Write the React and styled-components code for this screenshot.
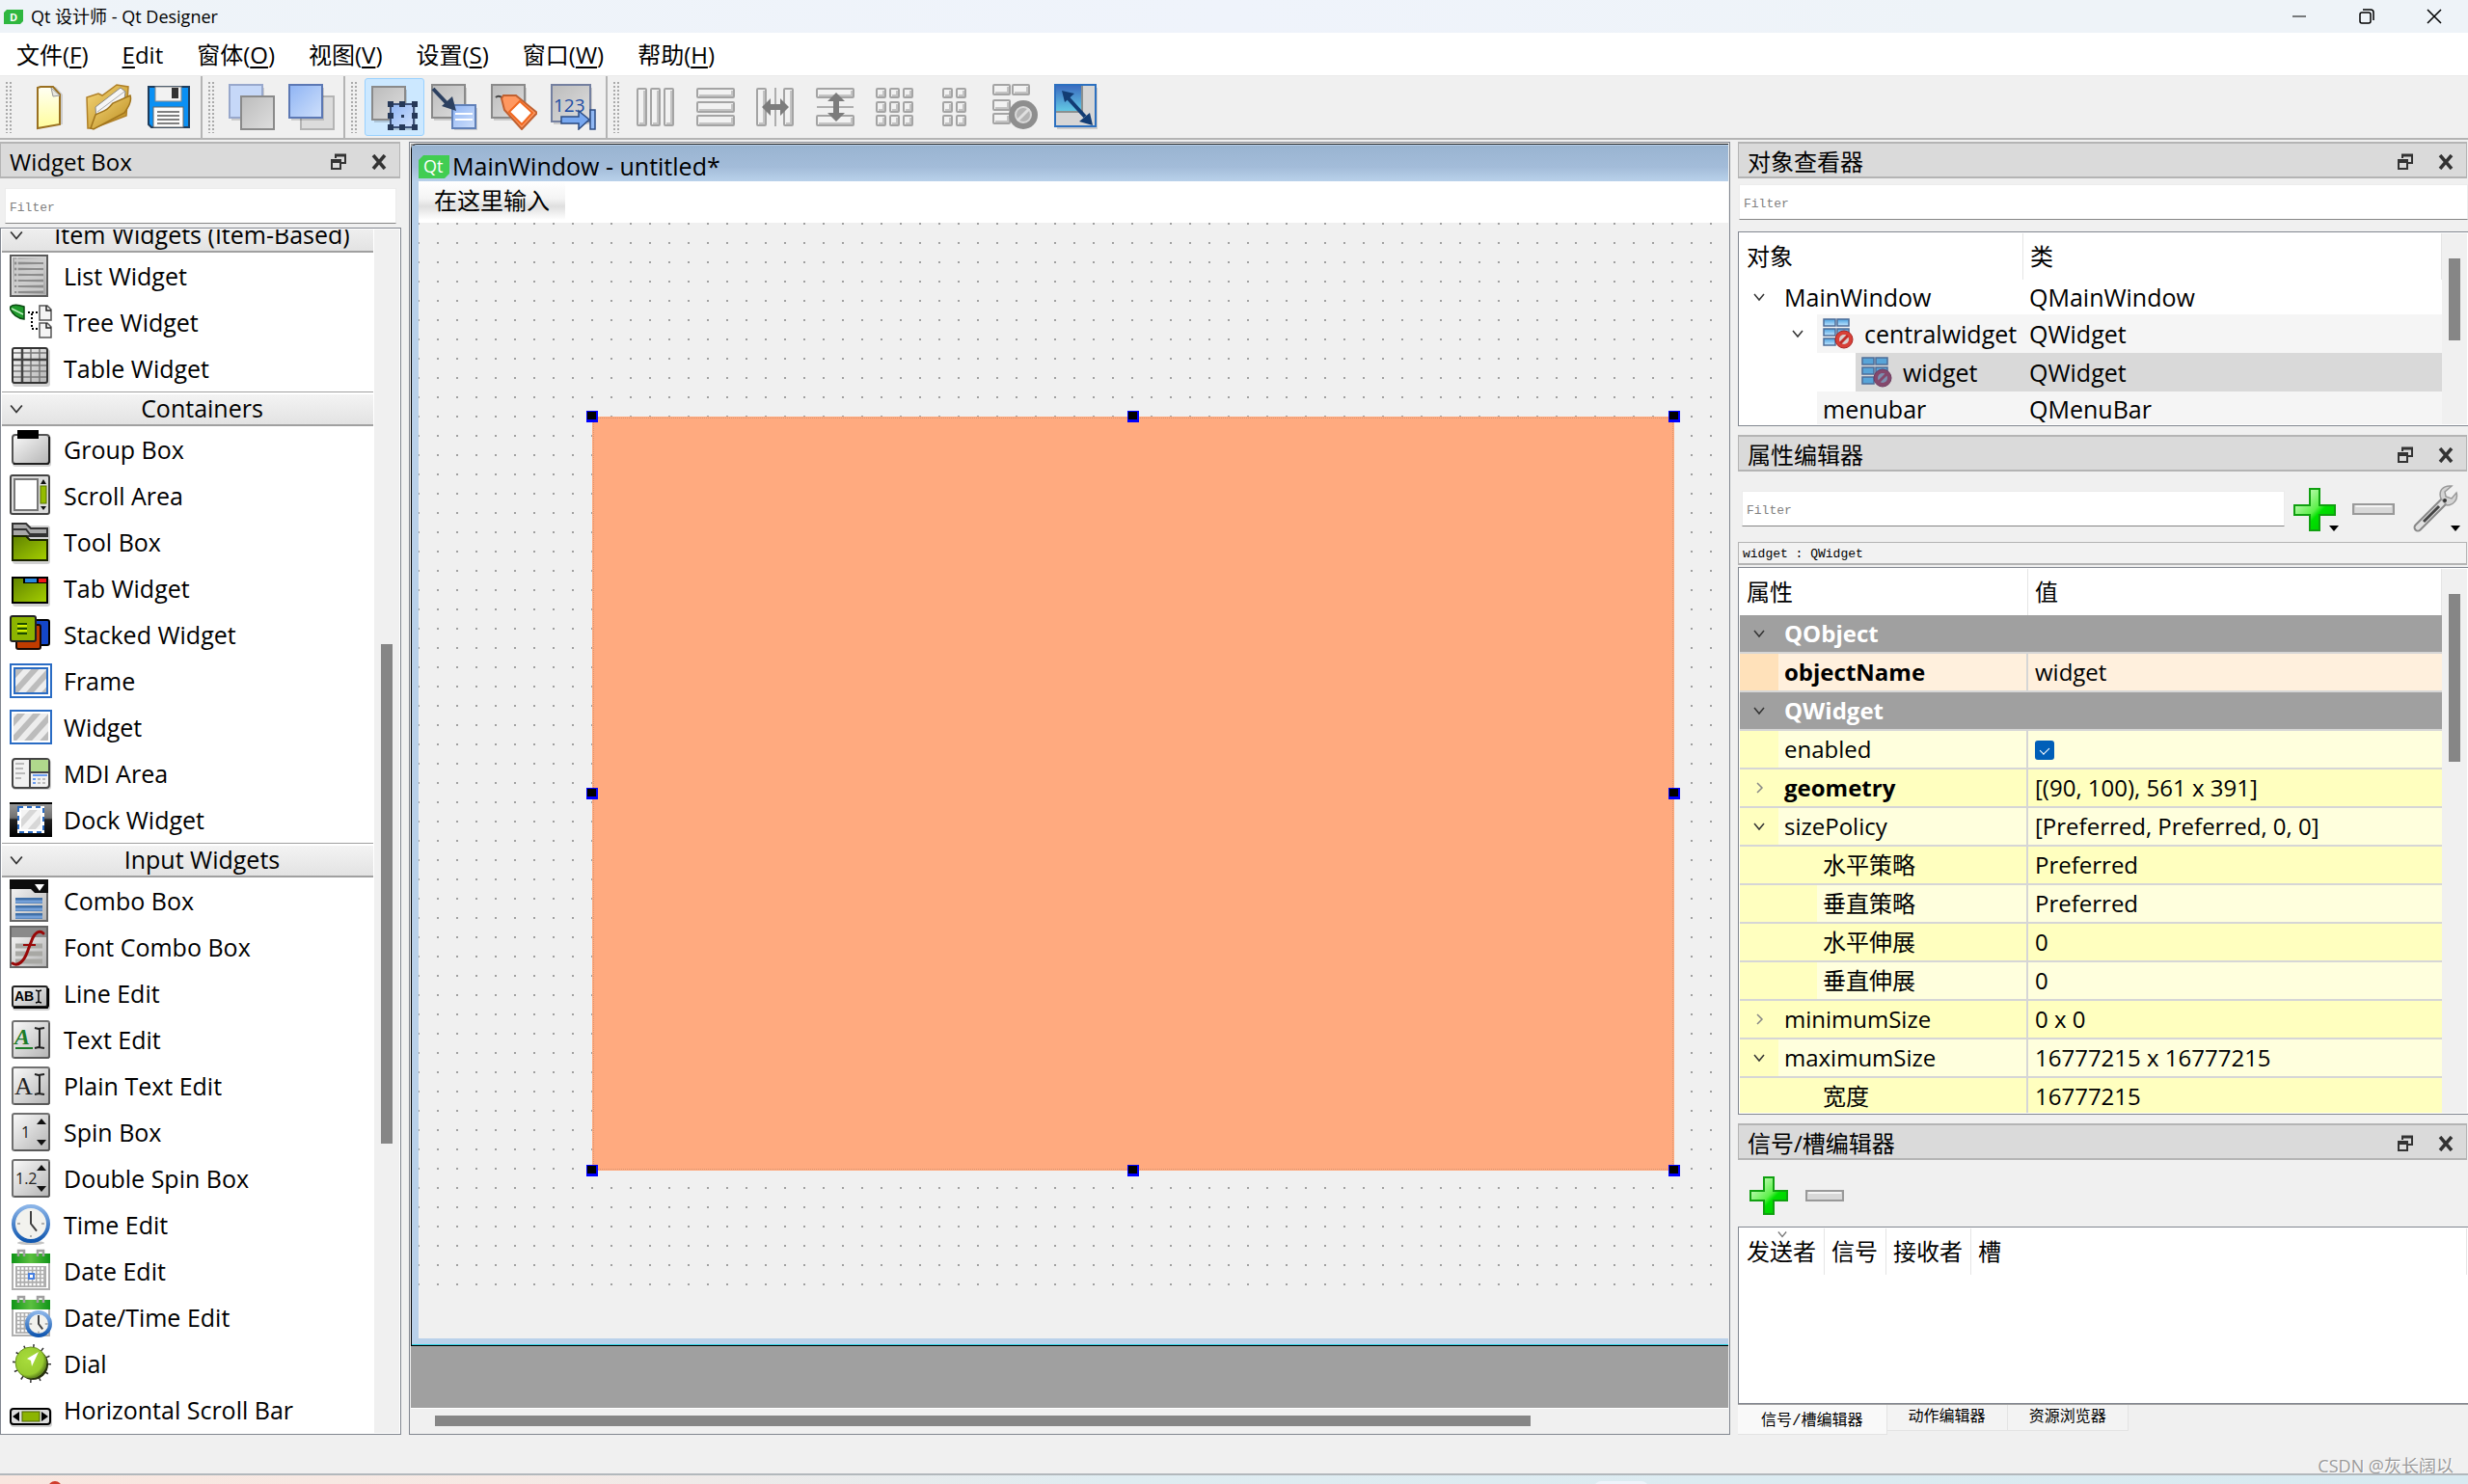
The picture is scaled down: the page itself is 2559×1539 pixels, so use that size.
import React, { useState } from 'react';
import styled, { createGlobalStyle, css } from 'styled-components';

const UI_FONT = '"Open Sans", "Noto Sans CJK SC", sans-serif';
const MONO_FONT = '"Liberation Mono", "Noto Sans CJK SC", monospace';

const GlobalStyle = createGlobalStyle`
  * {
    box-sizing: border-box;
  }

  body {
    margin: 0;
    background: #f0f0f0;
    color: #000;
    font-family: ${UI_FONT};
    font-size: 24px;
    line-height: 36px;
  }

  button {
    font: inherit;
    color: inherit;
    padding: 0;
    border: none;
    background: none;
  }

  svg {
    display: block;
    flex: none;
  }
`;

/* ---------- window chrome ---------- */

const Window = styled.div`
  display: flex;
  flex-direction: column;
  height: 100vh;
  overflow: hidden;
`;

const TitleBar = styled.header`
  display: flex;
  align-items: center;
  height: 34px;
  flex: none;
  padding-left: 4px;
  gap: 8px;
  background: linear-gradient(90deg, #eef3f8, #eff3fb 50%, #eef3f8 80%);
  font-size: 18px;
  line-height: 34px;
`;

const WindowButtons = styled.div`
  display: flex;
  margin-left: auto;
`;

const WindowButton = styled.button`
  display: flex;
  align-items: center;
  justify-content: center;
  width: 70px;
  height: 34px;
`;

const MenuBar = styled.nav`
  display: flex;
  flex: none;
  height: 45px;
  background: #fff;
  border-bottom: 1px solid #ebebeb;
`;

const MenuItem = styled.button`
  padding: 0 18px 0 17px;
  line-height: 41px;

  u {
    text-decoration-thickness: 2px;
    text-underline-offset: 3px;
  }
`;

const ToolBarArea = styled.div`
  display: flex;
  flex: none;
  height: 66px;
  border-bottom: 2px solid #b4b4b4;
`;

const ToolGroup = styled.div`
  display: flex;
  align-items: center;
  padding-right: 2px;
  border-right: ${(props) => (props.$last ? 'none' : '2px solid #b4b4b4')};
`;

const Grip = styled.span`
  width: 8px;
  height: 54px;
  margin: 0 7px 0 5px;
  background-image: radial-gradient(circle, #aaa 1px, transparent 1px);
  background-size: 4px 4px;
`;

const ToolButton = styled.button`
  display: flex;
  align-items: center;
  justify-content: center;
  width: 62px;
  height: 60px;
  border: 1px solid ${(props) => (props.$active ? '#99d1ff' : 'transparent')};
  border-radius: 3px;
  background: ${(props) => (props.$active ? '#cce8ff' : 'none')};
`;

const Workspace = styled.main`
  display: grid;
  grid-template-columns: 416px minmax(0, 1fr) 757px;
  grid-template-rows: minmax(0, 1fr);
  gap: 8px;
  flex: 1;
  min-height: 0;
  padding-top: 2px;
`;

/* ---------- docks ---------- */

const Dock = styled.section`
  display: flex;
  flex-direction: column;
  min-height: 0;
  min-width: 0;
  overflow: hidden;
`;

const DockTitle = styled.div`
  display: flex;
  align-items: center;
  flex: none;
  height: 38px;
  padding: 3px 10px 0 9px;
  margin-right: 1px;
  border: 2px solid #b4b4b4;
  border-width: 2px 1px;
  background: #dadada;

  h2 {
    flex: 1;
    margin: 0;
    font-size: 24px;
    font-weight: 400;
    line-height: 36px;
  }
`;

const DockButton = styled.button`
  display: flex;
  align-items: center;
  justify-content: center;
  width: 22px;
  height: 30px;
  margin-left: 20px;
`;

const Filter = styled.input`
  flex: ${(props) => (props.$grow ? '1' : 'none')};
  min-width: 0;
  height: 37px;
  margin: ${(props) => props.$margin || '0'};
  padding: 6px 4px 2px;
  border: 1px solid #ececec;
  border-bottom: 1px solid #868686;
  outline: none;
  background: #fff;
  font-family: ${MONO_FONT};
  font-size: 13px;

  &::placeholder {
    color: #808080;
    opacity: 1;
  }
`;

const Frame = styled.div`
  display: flex;
  flex: 1;
  min-height: 0;
  margin-top: ${(props) => props.$gap}px;
  border: 1px solid #828790;
  border-right-width: ${(props) => (props.$openRight ? '0' : '1px')};
  padding: 1px;
  background: #fff;
`;

const Track = styled.div`
  display: flex;
  flex: none;
  flex-direction: ${(props) => (props.$horizontal ? 'row' : 'column')};
  padding: ${(props) => (props.$horizontal ? '7px 0' : '0 7px')};
  background: #f0f0f0;
  ${(props) =>
    props.$horizontal
      ? css`
          height: 26px;
          border-top: 1px solid #fff;
        `
      : css`
          width: 26px;
        `}
`;

const TrackPart = styled.span`
  flex: ${(props) => props.$size} 0 0;
  background: ${(props) => (props.$thumb ? '#868686' : 'none')};
`;

/* ---------- widget box ---------- */

const WidgetList = styled.div`
  display: flex;
  flex: 1;
  flex-direction: column;
  justify-content: flex-end;
  overflow: hidden;
  font-size: 25px;
`;

const WidgetGroup = styled.button`
  display: flex;
  align-items: center;
  flex: none;
  height: 36px;
  padding: 0 8px;
  margin-right: 1px;
  border-top: 1px solid #a0a0a0;
  border-bottom: 2px solid #a0a0a0;
  background: linear-gradient(#fff 2px, #f3f3f3 2px, #e3e3e3);
  line-height: 33px;

  span {
    flex: 1;
    padding-left: 16px;
  }
`;

const WidgetRow = styled.button`
  display: flex;
  align-items: center;
  flex: none;
  gap: 12px;
  height: 48px;
  padding-left: 8px;
  text-align: left;
  line-height: 44px;
`;

/* ---------- form editor ---------- */

const MdiArea = styled.section`
  display: flex;
  flex-direction: column;
  min-width: 0;
  border: 1px solid #828790;
  padding: 1px;
  background: #f0f0f0;
  overflow: hidden;
`;

const MdiBody = styled.div`
  flex: 1;
  display: flex;
  flex-direction: column;
  min-height: 0;
  padding-bottom: 64px;
  background: #a0a0a0;
`;

const FormWindow = styled.div`
  display: flex;
  flex: 1;
  flex-direction: column;
  padding: 1px 0 7px 7px;
  border-top: 1px solid #222;
  border-left: 1px solid #000;
  border-bottom: 1px solid #000;
  border-top-left-radius: 6px;
  background: #b9d1ea;
  box-shadow: inset 0 -1px #2fd0e0;
`;

const FormTitle = styled.div`
  display: flex;
  align-items: center;
  gap: 3px;
  flex: none;
  height: 37px;
  margin-left: -7px;
  padding: 5px 0 0 7px;
  background: linear-gradient(#99b4d1, #a3bcd9 60%, #b9d1ea);
  font-size: 25px;

  svg {
    margin-top: 2px;
  }
`;

const FormMenu = styled.div`
  flex: none;
  height: 43px;
  background: #fff;
`;

const FormMenuItem = styled.button`
  height: 40px;
  padding: 0 16px;
  background: linear-gradient(#fff, #f4f4f4 45%, #dfdfdf 65%, #fff);
  line-height: 40px;
`;

const FormCanvas = styled.div`
  position: relative;
  flex: 1;
  padding-bottom: 55px;
  background: #f0f0f0;
`;

const DotGrid = styled.div`
  height: 100%;
  background-image: conic-gradient(at 2px 2px, transparent 75%, #a0a0a0 0);
  background-size: 20px 20px;
  background-position: -1px 0;
`;

const PlacedWidget = styled.div`
  position: absolute;
  left: 180px;
  top: 201px;
  width: 1122px;
  height: 782px;
  background: #ffaa7f;
  outline: 1px dotted #d99470;
  outline-offset: -2px;
`;

const Handle = styled.span`
  position: absolute;
  left: ${(props) => props.$x}%;
  top: ${(props) => props.$y}%;
  width: 12px;
  height: 12px;
  margin: -6px;
  border: 1px solid #0000ff;
  border-right-width: 2px;
  border-bottom-width: 3px;
  background: #000;
`;

/* ---------- right column ---------- */

const RightColumn = styled.div`
  display: grid;
  grid-template-rows: 295px minmax(0, 1fr) 323px;
  gap: 9px;
  min-height: 0;
`;

const TableView = styled.div`
  flex: 1;
  min-width: 0;
  overflow: hidden;
`;

const Table = styled.table`
  width: 100%;
  border-collapse: collapse;
  table-layout: fixed;

  th,
  td {
    padding: 0;
    font-weight: 400;
    text-align: left;
    white-space: nowrap;
  }
`;

const HeadCell = styled.th`
  width: ${(props) => (props.$width ? `${props.$width}px` : 'auto')};

  div {
    position: relative;
    height: 48px;
    padding: 0 0 0 7px;
    border-right: 1px solid #e5e5e5;
    line-height: 48px;
  }

  svg {
    position: absolute;
    top: 1px;
    left: calc(50% - 5px);
  }
`;

const ObjectName = styled.div`
  display: flex;
  align-items: center;
  height: ${(props) => props.$height}px;
  margin-left: ${(props) => props.$indent}px;
  font-size: 25px;

  span {
    flex: 1;
    align-self: stretch;
    display: flex;
    align-items: center;
    gap: 11px;
    padding-left: 6px;
    background: ${(props) => props.$bg};
  }
`;

const ObjectClass = styled.td`
  background: ${(props) => props.$bg};
  font-size: 25px;

  div {
    padding-left: 6px;
  }
`;

const ArrowCell = styled.i`
  display: flex;
  align-items: center;
  justify-content: center;
  width: 40px;
  flex: none;
`;

const PropRow = styled.tr`
  background: ${(props) => props.$bg};
  color: ${(props) => (props.$group ? '#fff' : '#000')};
  font-weight: ${(props) => (props.$bold ? 700 : 400)};

  td {
    border-bottom: 2px solid #d6d6d6;
  }

  td:first-child > div {
    display: flex;
    height: 38px;
    background: linear-gradient(90deg, ${(props) => props.$edge} ${(props) => props.$indent}px, transparent 0);
    border-right: ${(props) => (props.$group ? 'none' : '2px solid #d6d6d6')};
    line-height: 38px;
  }

  td:first-child span {
    margin-left: ${(props) => props.$indent - 40 + 6}px;
    font-weight: ${(props) => (props.$bold ? 700 : 400)};
  }

  td:nth-child(2) {
    padding-left: 7px;
    line-height: 38px;
  }
`;

const CheckBox = styled.input`
  appearance: none;
  display: block;
  width: 20px;
  height: 20px;
  margin: 1px 0 0;
  border-radius: 3px;
  background: #005fb8;
  position: relative;

  &::after {
    content: '';
    position: absolute;
    left: 7px;
    top: 5px;
    width: 5px;
    height: 8px;
    border: solid #fff;
    border-width: 0 1px 1px 0;
    transform: rotate(45deg);
  }
`;

const PropTools = styled.div`
  display: flex;
  align-items: center;
  flex: none;
  height: 73px;
  padding: 4px 8px 0 4px;
`;

const PropToolButton = styled.button`
  width: 50px;
  height: 54px;
  margin-left: ${(props) => props.$gap}px;
`;

const ObjectLabel = styled.div`
  flex: none;
  height: 24px;
  padding-left: 4px;
  margin-right: 1px;
  border: 1px solid #b4b4b4;
  border-bottom-width: 2px;
  background: #f2f2f2;
  font-family: ${MONO_FONT};
  font-size: 13px;
  line-height: 24px;
`;

const SignalTools = styled.div`
  display: flex;
  align-items: center;
  flex: none;
  gap: 18px;
  height: 68px;
  padding: 6px 12px 0;
`;

const Tabs = styled.div`
  display: flex;
  flex: none;
  height: 32px;
  border-top: 1px solid #a0a0a0;
`;

const Tab = styled.button`
  height: ${(props) => (props.$active ? 31 : 27)}px;
  padding: ${(props) => (props.$active ? '3px 24px 0' : '0 22px')};
  border: 1px solid #e3e3e3;
  border-top: none;
  border-left: none;
  background: ${(props) => (props.$active ? '#f9f9f9' : '#f3f3f3')};
  font-family: ${MONO_FONT};
  font-size: 16px;
  line-height: 26px;
`;

const StatusBar = styled.footer`
  display: flex;
  flex: none;
  align-items: flex-end;
  justify-content: flex-end;
  height: 40px;
  padding-right: 15px;
  color: #9a9a9a;
  font-size: 18px;
  line-height: 16px;
  text-shadow: 1px 1px #fff;
`;

const Desktop = styled.div`
  display: flex;
  flex: none;
  justify-content: space-between;
  height: 11px;
  padding: 6px 850px 0 50px;
  border-top: 2px solid #b2b8bc;
  background: linear-gradient(90deg, #f9e6df, #f6e9e4 20%, #dfecf1 45%, #d8eaf1);
  overflow: hidden;
`;

const TaskIcon = styled.span`
  flex: none;
  width: ${(props) => props.$width}px;
  height: 14px;
  border-radius: 7px;
  background: ${(props) => props.$color};
`;

/* ---------- icons ---------- */

const HiddenSvg = styled.svg`
  position: absolute;
`;

const Defs = () => (
  <HiddenSvg width="0" height="0" aria-hidden="true">
    <defs>
      <linearGradient id="gray" x1="0" y1="0" x2="1" y2="1">
        <stop offset="0" stopColor="#fafafa" />
        <stop offset="1" stopColor="#b4b4b4" />
      </linearGradient>
      <linearGradient id="steel" x1="0" y1="0" x2="1" y2="1">
        <stop offset="0" stopColor="#a8a8a8" />
        <stop offset=".5" stopColor="#d0d0d0" />
        <stop offset="1" stopColor="#a4a4a4" />
      </linearGradient>
      <linearGradient id="pane" x1="0" y1="0" x2="1" y2="1">
        <stop offset="0" stopColor="#bcbcbc" />
        <stop offset="1" stopColor="#dedede" />
      </linearGradient>
      <linearGradient id="blue" x1="0" y1="0" x2="1" y2="1">
        <stop offset="0" stopColor="#8fb4f4" />
        <stop offset="1" stopColor="#cfe0fb" />
      </linearGradient>
      <linearGradient id="green" x1="0" y1="0" x2="1" y2="1">
        <stop offset="0" stopColor="#5f8200" />
        <stop offset="1" stopColor="#a6d000" />
      </linearGradient>
      <linearGradient id="plus" x1="0" y1="0" x2="1" y2="1">
        <stop offset=".1" stopColor="#d4fbc8" />
        <stop offset=".5" stopColor="#5cf04a" />
        <stop offset=".6" stopColor="#00e000" />
        <stop offset="1" stopColor="#00c400" />
      </linearGradient>
      <linearGradient id="gold" x1="0" y1="0" x2="1" y2="1">
        <stop offset="0" stopColor="#f6d77a" />
        <stop offset="1" stopColor="#b98a1c" />
      </linearGradient>
      <linearGradient id="paper" x1="0" y1="0" x2="0" y2="1">
        <stop offset="0" stopColor="#fffff4" />
        <stop offset="1" stopColor="#fffd9c" />
      </linearGradient>
      <linearGradient id="rim" x1="0" y1="0" x2="0" y2="1">
        <stop offset="0" stopColor="#8ab4e8" />
        <stop offset="1" stopColor="#1258b0" />
      </linearGradient>
      <linearGradient id="calendar" x1="0" y1="0" x2="1" y2="0">
        <stop offset="0" stopColor="#109418" />
        <stop offset=".5" stopColor="#5cc040" />
        <stop offset="1" stopColor="#109418" />
      </linearGradient>
      <linearGradient id="dark" x1="0" y1="0" x2="0" y2="1">
        <stop offset="0" stopColor="#9a9a9a" />
        <stop offset=".45" stopColor="#707070" />
        <stop offset=".5" stopColor="#222" />
        <stop offset="1" stopColor="#000" />
      </linearGradient>
      <linearGradient id="sky" x1="0" y1="0" x2="0" y2="1">
        <stop offset="0" stopColor="#3c6cc0" />
        <stop offset="1" stopColor="#62c8e4" />
      </linearGradient>
      <linearGradient id="cell" x1="0" y1="0" x2="0" y2="1">
        <stop offset="0" stopColor="#4aa0e0" />
        <stop offset="1" stopColor="#c4e8ff" />
      </linearGradient>
      <radialGradient id="dial" cx=".4" cy=".4" r=".7">
        <stop offset="0" stopColor="#a8dc3c" />
        <stop offset=".7" stopColor="#98cc30" />
        <stop offset="1" stopColor="#3c5810" />
      </radialGradient>
      <pattern id="stripes" width="12" height="12" patternUnits="userSpaceOnUse" patternTransform="rotate(42)">
        <rect width="12" height="12" fill="#ededed" />
        <rect width="6" height="12" fill="#bcbcbc" />
      </pattern>
    </defs>
  </HiddenSvg>
);

const Shadow = ({ x, y, w, h }) => (
  <rect x={x + 1} y={y + 2} width={w + 1} height={h + 1} rx="3" fill="#000" opacity=".18" />
);

const Key = ({ children }) => (
  <>
    <rect x="3" y="4" width="38" height="38" rx="2" fill="url(#gray)" stroke="#707070" strokeWidth="2" />
    <path d="M41 6v36H5" fill="none" stroke="#444" strokeWidth="1" />
    {children}
  </>
);

const Clock = ({ cx, cy, r }) => (
  <>
    <circle cx={cx} cy={cy} r={r - 2} fill="#f2f2ee" stroke="url(#rim)" strokeWidth="4" />
    <path
      d={`M${cx} ${cy - r * 0.65}V${cy}L${cx + r * 0.3} ${cy + r * 0.38}`}
      fill="none"
      stroke="#404040"
      strokeWidth="2"
    />
    <path
      d={`M${cx - r * 0.7} ${cy}h3M${cx + r * 0.7} ${cy}h-3M${cx} ${cy + r * 0.7}v-2`}
      stroke="#999"
      strokeWidth="1.5"
    />
  </>
);

const Calendar = () => (
  <>
    <rect x="3" y="12" width="38" height="30" fill="#fff" stroke="#b0b0b0" strokeWidth="2" />
    <rect x="2" y="5" width="40" height="10" fill="url(#calendar)" />
    <path d="M9 8V2h6v6M29 8V2h6v6" fill="none" stroke="#a0a0a0" strokeWidth="2.5" />
    <rect x="6" y="18" width="32" height="22" fill="#aeaeae" />
    <path
      d="M8 20.500h28M8 24.500h28M8 28.500h28M8 32.500h28M8 37h28"
      stroke="#fff"
      strokeWidth="2.5"
      strokeDasharray="2.500 1.600"
    />
  </>
);

const Spin = ({ label, x }) => (
  <Key>
    <text x={x} y="29" fontFamily="Open Sans" fontSize="16" fill="#222">
      {label}
    </text>
    <path d="M28 15l5-6 5 6zM28 31l5 6 5-6z" fill="#111" />
  </Key>
);

const widgetIcons = {
  list: (
    <>
      <rect x="1" y="2" width="38" height="42" fill="url(#gray)" stroke="#5a5a5a" strokeWidth="2" />
      <rect x="3" y="4" width="34" height="38" fill="url(#steel)" />
      <path d="M5 10h30M5 16h30M5 22h30M5 28h30M5 34h30M5 40h30" stroke="#8c8c8c" strokeWidth="2" />
      <path d="M5 7h30M5 13h30M5 19h30M5 25h30M5 31h30M5 37h30" stroke="#ccc" strokeWidth="2" />
      <path d="M8 4v38" stroke="#ccc" strokeWidth="1.5" />
    </>
  ),
  tree: (
    <>
      <path d="M0 8C3 4 9 5 15 7v13C8 19 3 16 0 8z" fill="#1f9a2c" stroke="#0b4a12" strokeWidth="1.5" />
      <path d="M2 9l12 6" stroke="#bff0bf" strokeWidth="1.5" />
      <path d="M19 13h10M23 14v16M23 30h6" fill="none" stroke="#000" strokeWidth="2" strokeDasharray="2 2" />
      <path d="M31 6h8l4 4v11H31zM31 24h8l4 4v11H31z" fill="#f4f4f4" stroke="#555" strokeWidth="1.5" />
      <path d="M38 6v5h5M38 24v5h5" fill="none" stroke="#222" strokeWidth="1.5" />
    </>
  ),
  table: (
    <>
      <Shadow x={2} y={1} w={38} h={38} />
      <rect x="3" y="2" width="36" height="36" rx="2" fill="url(#gray)" stroke="#333" strokeWidth="2" />
      <path d="M4 7h34M4 20h34M4 26h34M4 32h34M22 3v34M31 3v34" stroke="#777" strokeWidth="1.5" />
      <path d="M4 14h34M13 3v34" stroke="#444" strokeWidth="2.5" />
    </>
  ),
  group: (
    <>
      <Shadow x={2} y={7} w={39} h={31} />
      <rect x="3" y="8" width="38" height="30" rx="3" fill="url(#gray)" stroke="#555" strokeWidth="2" />
      <path d="M4 38h36l1-2V10" fill="none" stroke="#111" strokeWidth="1.5" />
      <rect x="8" y="3" width="22" height="9" fill="#000" />
    </>
  ),
  scroll: (
    <>
      <rect x="1" y="2" width="40" height="40" rx="2" fill="#dcdcdc" stroke="#444" strokeWidth="2" />
      <rect x="5" y="6" width="24" height="32" fill="#fff" stroke="#777" strokeWidth="2" />
      <path d="M32 11l3-5 3 5zM32 34l3 4 3-4z" fill="#111" />
      <rect x="32" y="13" width="6" height="18" fill="#94bc00" stroke="#5a7400" />
    </>
  ),
  toolbox: (
    <>
      <Shadow x={2} y={4} w={38} h={39} />
      <path d="M3 4h14l5 5h17v8H3z" fill="#a8a8a8" stroke="#333" strokeWidth="2" />
      <path d="M3 10h14l4 5h18" fill="none" stroke="#333" strokeWidth="2" />
      <path d="M3 17h14l4 4h18v21H3z" fill="url(#green)" stroke="#1a2400" strokeWidth="2" />
    </>
  ),
  tab: (
    <>
      <Shadow x={2} y={11} w={38} h={28} />
      <rect x="3" y="12" width="36" height="26" fill="url(#green)" stroke="#000" strokeWidth="2" />
      <path d="M14 11h26v7H14z" fill="#000" />
      <rect x="16" y="13" width="12" height="4" fill="#2888e0" />
      <rect x="30" y="13" width="8" height="4" fill="#f01818" />
    </>
  ),
  stacked: (
    <>
      <rect x="24" y="8" width="17" height="26" rx="2" fill="#1446c8" stroke="#000" strokeWidth="2" />
      <rect x="7" y="13" width="25" height="25" rx="2" fill="#c03c00" stroke="#1a0800" strokeWidth="2" />
      <rect x="1" y="4" width="26" height="26" rx="2" fill="#8cb400" stroke="#222" strokeWidth="2" />
      <path d="M8 12h10M8 17h10M8 22h10" stroke="#1c4c00" strokeWidth="2" />
      <path d="M8 14h10M8 19h10" stroke="#d4f000" strokeWidth="2" />
    </>
  ),
  frame: (
    <>
      <rect x="1" y="6" width="42" height="34" fill="#fff" stroke="#2a6cc4" strokeWidth="2" />
      <rect x="5" y="10" width="34" height="26" fill="url(#stripes)" stroke="#2a6cc4" strokeWidth="2" />
    </>
  ),
  widget: (
    <>
      <rect x="1" y="6" width="42" height="34" fill="#fff" stroke="#2a6cc4" strokeWidth="2" />
      <rect x="4" y="9" width="36" height="28" fill="url(#stripes)" />
    </>
  ),
  mdi: (
    <>
      <Shadow x={2} y={7} w={39} h={30} />
      <rect x="3" y="8" width="38" height="30" rx="3" fill="#f2f2f2" stroke="#444" strokeWidth="2" />
      <path d="M6 13h9M6 18h8M6 23h10M6 28h6" stroke="#bbb" strokeWidth="2" />
      <rect x="22" y="9" width="18" height="12" fill="#b0d88c" />
      <path d="M21 8v30M21 22h20" stroke="#444" strokeWidth="2" />
      <path d="M24 25h15M24 29h3M24 33h3" stroke="#6a9cf0" strokeWidth="2" />
      <path d="M29 29h10M29 33h10" stroke="#aaa" strokeWidth="1.5" strokeDasharray="3 2" />
    </>
  ),
  dock: (
    <>
      <rect x="0" y="5" width="44" height="36" fill="url(#dark)" />
      <path d="M0 6h44" stroke="#000" strokeWidth="2" />
      <rect x="8" y="9" width="28" height="28" fill="#fff" />
      <rect x="9" y="10" width="26" height="26" fill="none" stroke="#2a6cc4" strokeWidth="2" strokeDasharray="5 4" />
      <rect x="12" y="13" width="20" height="20" fill="url(#stripes)" opacity=".6" />
    </>
  ),
  combo: (
    <>
      <rect x="1" y="2" width="38" height="42" fill="url(#gray)" stroke="#666" strokeWidth="2" />
      <path d="M0 1h40v14H26l-4-4H0z" fill="#0c0c0c" />
      <path d="M26 6h10l-5 7z" fill="#fff" />
      <path d="M6 23h28M6 31h28M6 39h28" stroke="#4070a8" strokeWidth="6" />
      <path d="M6 24h28M6 32h28M6 40h28" stroke="#74a0d8" strokeWidth="3" />
    </>
  ),
  font: (
    <>
      <rect x="1" y="2" width="38" height="42" fill="url(#gray)" stroke="#666" strokeWidth="2" />
      <rect x="2" y="3" width="36" height="10" fill="#8a8a8a" />
      <path d="M6 22h28M6 30h28M6 38h28" stroke="#a8a8a4" strokeWidth="5" />
      <path
        d="M35 9c-4-4-9-1-12 7l-5 13C15 37 9 44 3 40"
        fill="none"
        stroke="#980808"
        strokeWidth="3"
        strokeLinecap="round"
      />
      <path d="M14 21h13" stroke="#980808" strokeWidth="2" />
    </>
  ),
  line: (
    <>
      <Shadow x={2} y={15} w={38} h={23} />
      <rect x="3" y="16" width="36" height="21" rx="2" fill="url(#gray)" stroke="#222" strokeWidth="2" />
      <path d="M4 38h35l1-2V18" fill="none" stroke="#000" strokeWidth="2" />
      <text x="5" y="31" fontFamily="Liberation Sans" fontWeight="700" fontSize="14" fill="#000">
        AB
      </text>
      <path d="M27 20l3 1 3-1M27 33l3-1 3 1M30 21v11" fill="none" stroke="#000" strokeWidth="1.5" />
    </>
  ),
  text: (
    <Key>
      <text x="5" y="28" fontFamily="Liberation Serif" fontStyle="italic" fontWeight="700" fontSize="24" fill="#1c7c28">
        A
      </text>
      <path d="M6 32h18" stroke="#1c7c28" strokeWidth="2" />
      <path d="M26 11l4 1 6-1M26 32l4-1 6 1M31 12v19" fill="none" stroke="#222" strokeWidth="2" />
    </Key>
  ),
  plain: (
    <Key>
      <text x="5" y="32" fontFamily="Liberation Serif" fontSize="26" fill="#222">
        A
      </text>
      <path d="M26 11l4 1 6-1M26 32l4-1 6 1M31 12v19" fill="none" stroke="#222" strokeWidth="2" />
    </Key>
  ),
  spin: <Spin label="1" x={12} />,
  double: <Spin label="1.2" x={6} />,
  time: (
    <>
      <ellipse cx="22" cy="42" rx="14" ry="2" fill="#888" opacity=".5" />
      <Clock cx={22} cy={22} r={20} />
    </>
  ),
  date: (
    <>
      <Calendar />
      <rect x="20" y="26" width="5" height="5" fill="#fff" stroke="#4880e0" strokeWidth="2" />
    </>
  ),
  datetime: (
    <>
      <Calendar />
      <Clock cx={30} cy={30} r={14} />
    </>
  ),
  dial: (
    <>
      <circle cx="23" cy="23" r="18" fill="none" stroke="#333" strokeWidth="4" strokeDasharray="1.500 8" />
      <circle cx="24" cy="24" r="16" fill="#26300c" />
      <circle cx="22" cy="22" r="16" fill="url(#dial)" stroke="#6c9420" />
      <path d="M30 11L18 18l4 2 1 6z" fill="#fff" />
    </>
  ),
  hscroll: (
    <>
      <Shadow x={0} y={21} w={42} h={17} />
      <rect x="1" y="22" width="41" height="16" rx="3" fill="#ddd" stroke="#000" strokeWidth="2" />
      <path d="M10 25v10l-7-5zM33 25v10l7-5z" fill="#000" />
      <rect x="13" y="25" width="18" height="10" fill="#8cb400" stroke="#4c6400" />
    </>
  ),
};

const WidgetIcon = ({ name }) => (
  <svg width="44" height="46" viewBox="0 0 44 46" aria-hidden="true">
    {widgetIcons[name]}
  </svg>
);

const Pane = ({ x, y, w = 34, h = 34, fill = 'url(#pane)', stroke = '#8a8a8a' }) => (
  <>
    <rect x={x + 2} y={y + 3} width={w} height={h} fill="#000" opacity=".15" />
    <rect x={x} y={y} width={w} height={h} fill={fill} stroke={stroke} strokeWidth="2" />
  </>
);

const Bars = ({ rects }) =>
  rects.map(([x, y, w, h]) => (
    <g key={`${x}-${y}`}>
      <rect x={x} y={y} width={w} height={h} rx="1" fill="#f2f2f2" stroke="#a4a4a4" strokeWidth="2" />
      <path d={`M${x + 2} ${y + h - 2}h${w - 4}V${y + 2}`} fill="none" stroke="#c4c4c4" strokeWidth="2" />
    </g>
  ));

const toolIcons = {
  new: (
    <>
      <path d="M12 4l3-1h16l7 8v31l-26 4z" fill="#000" opacity=".15" />
      <path d="M12 4l3-1h13l7 8v31l-23 4z" fill="url(#paper)" stroke="#9a7020" strokeWidth="2" />
      <path d="M26 4l2 9 7-1z" fill="#e8e8e0" stroke="#999" strokeWidth="1" />
    </>
  ),
  open: (
    <>
      <path d="M1 14l12-4 4 2L32 1l12 2-2 30L8 46H2z" fill="url(#gold)" stroke="#b08028" strokeWidth="1.5" />
      <path d="M10 24L36 4l5 4-2 16-28 14z" fill="#f6f6f6" stroke="#888" />
      <path d="M12 29L40 8" stroke="#aaa" />
      <path d="M5 46l5-14c8-4 12-4 18-12l18-8c2 6-2 12-6 18L8 47z" fill="url(#gold)" stroke="#a0741c" strokeWidth="1.5" />
    </>
  ),
  save: (
    <>
      <path d="M3 3h42v42H6l-3-3z" fill="#0a90f4" stroke="#1e3c5c" strokeWidth="2" />
      <rect x="10" y="3" width="27" height="15" fill="#f2f2f2" stroke="#888" />
      <rect x="27" y="4" width="7" height="11" fill="#333" />
      <rect x="8" y="24" width="31" height="21" fill="#fcfcfc" stroke="#666" />
      <path d="M12 29h23M12 33h23M12 37h23M12 41h23" stroke="#555" strokeWidth="1.5" />
    </>
  ),
  back: (
    <>
      <Pane x={1} y={1} fill="#c6d8f8" stroke="#98a8cc" />
      <Pane x={13} y={13} />
    </>
  ),
  front: (
    <>
      <Pane x={13} y={13} fill="#dcdcdc" stroke="#b4b4b4" />
      <Pane x={1} y={1} fill="url(#blue)" stroke="#5c78b4" />
    </>
  ),
  editWidgets: (
    <>
      <Pane x={1} y={3} />
      <Pane x={20} y={21} w={24} h={24} fill="url(#blue)" stroke="#3c5078" />
      <path
        d="M17 18h6v6h-6zM29 18h6v6h-6zM42 18h6v6h-6zM17 30h6v6h-6zM42 30h6v6h-6zM17 42h6v6h-6zM29 42h6v6h-6zM42 42h6v6h-6z"
        fill="#263858"
      />
      <rect x="31" y="32" width="3" height="3" fill="#263858" />
    </>
  ),
  editSignals: (
    <>
      <Pane x={1} y={1} />
      <Pane x={22} y={22} w={24} h={24} fill="url(#blue)" stroke="#6080b8" />
      <path d="M25 31h18M25 37h18" stroke="#fff" strokeWidth="2" />
      <path d="M2 5l16 17" stroke="#2c4060" strokeWidth="4" />
      <path d="M26 28l-15-5 11-10z" fill="#2c4060" />
    </>
  ),
  editBuddies: (
    <>
      <Pane x={1} y={1} />
      <path d="M5 14c3-3 8 0 9 4" fill="none" stroke="#444" strokeWidth="2" />
      <path d="M11 15l2-3h13l22 18-16 17-18-20z" fill="#ff9860" stroke="#c06030" strokeWidth="2" />
      <path d="M30 18l13 12-11 12-13-13z" fill="#fff" stroke="#f06820" strokeWidth="2" />
    </>
  ),
  editTabs: (
    <>
      <Pane x={1} y={1} w={40} h={38} stroke="#7480a0" />
      <text x="3" y="29" fontFamily="Open Sans" fontSize="19" fill="#1c4ca4">
        123
      </text>
      <path d="M11 34h18v-6l11 9-11 10v-6H11z" fill="#78a8f0" stroke="#2c4c84" strokeWidth="1.5" />
      <rect x="41" y="27" width="5" height="20" fill="#90b8f4" stroke="#2c4c84" strokeWidth="1.5" />
    </>
  ),
  layoutH: <Bars rects={[[4, 5, 9, 38], [18, 5, 9, 38], [32, 5, 9, 38]]} />,
  layoutV: <Bars rects={[[4, 5, 38, 9], [4, 19, 38, 10], [4, 33, 38, 10]]} />,
  splitH: (
    <>
      <Bars rects={[[4, 5, 9, 38], [32, 5, 9, 38]]} />
      <path d="M23 4v40" stroke="#999" strokeWidth="1.5" />
      <path d="M9 24l9-9v6h10v-6l9 9-9 9v-6H18v6z" fill="#7c7c7c" />
    </>
  ),
  splitV: (
    <>
      <Bars rects={[[4, 5, 38, 9], [4, 33, 38, 10]]} />
      <path d="M4 24h38" stroke="#999" strokeWidth="1.5" />
      <path d="M24 9l9 9h-6v12h6l-9 9-9-9h6V18h-6z" fill="#7c7c7c" />
    </>
  ),
  grid: (
    <Bars
      rects={[
        [4, 5, 9, 9], [18, 5, 9, 9], [32, 5, 9, 9],
        [4, 19, 9, 10], [18, 19, 9, 10], [32, 19, 9, 10],
        [4, 33, 9, 10], [18, 33, 9, 10], [32, 33, 9, 10],
      ]}
    />
  ),
  form: (
    <Bars
      rects={[
        [11, 5, 9, 9], [25, 5, 9, 9],
        [11, 19, 9, 10], [25, 19, 9, 10],
        [11, 33, 9, 10], [25, 33, 9, 10],
      ]}
    />
  ),
  breakLayout: (
    <>
      <Bars rects={[[1, 1, 17, 10], [21, 1, 17, 10], [1, 17, 17, 10], [1, 31, 17, 10]]} />
      <circle cx="32" cy="32" r="15" fill="#8e8e8e" />
      <circle cx="32" cy="32" r="8" fill="#b4b4b4" stroke="#d8d8d8" strokeWidth="2" />
      <path d="M26 38l12-12" stroke="#e0e0e0" strokeWidth="3" />
    </>
  ),
  adjust: (
    <>
      <Pane x={3} y={1} w={42} h={43} fill="#d6d6d6" stroke="#2c70c0" />
      <rect x="4" y="2" width="26" height="26" fill="url(#sky)" />
      <path d="M31 2v27H4" fill="none" stroke="#8a9090" strokeWidth="2" />
      <path d="M14 12l20 22" stroke="#123c74" strokeWidth="4" />
      <path d="M10 7l13 3-10 9zM42 43l-14-4 11-9z" fill="#123c74" />
    </>
  ),
};

const ToolIcon = ({ name }) => (
  <svg width="48" height="48" viewBox="0 0 48 48" aria-hidden="true">
    {toolIcons[name]}
  </svg>
);

const Chevron = ({ right, color = '#333', size = 12 }) => (
  <svg width={size} height={size} viewBox="0 0 12 12" aria-hidden="true">
    <path d={right ? 'M4 1l5 5-5 5' : 'M1 3l5 6 5-6'} fill="none" stroke={color} strokeWidth="1.5" />
  </svg>
);

const PlusIcon = ({ size = 40 }) => (
  <svg width={size} height={size} viewBox="0 0 40 40" aria-hidden="true">
    <path d="M15 1h10v14h14v10H25v14H15V25H1V15h14z" fill="url(#plus)" stroke="#10a010" strokeWidth="2" />
  </svg>
);

const MinusIcon = ({ width = 40 }) => (
  <svg width={width} height="12" viewBox="0 0 40 12" preserveAspectRatio="none" aria-hidden="true">
    <rect x="1" y="1" width="38" height="10" fill="#d8d8d8" stroke="#999" strokeWidth="2" />
    <path d="M3 3h34" stroke="#f4f4f4" strokeWidth="2" />
  </svg>
);

const LayoutBadge = ({ muted }) => (
  <svg width="32" height="34" viewBox="0 0 32 34" aria-hidden="true">
    {[[1, 2], [15, 2], [1, 12], [15, 12], [1, 22]].map(([x, y]) => (
      <rect
        key={`${x}-${y}`}
        x={x}
        y={y}
        width="12"
        height="7"
        fill={muted ? '#58a4d8' : 'url(#cell)'}
        stroke="#4c6c98"
        strokeWidth="1.5"
      />
    ))}
    <circle cx="22" cy="23" r="9" fill={muted ? '#84486c' : '#d84038'} stroke={muted ? '#6c3c60' : '#a82420'} />
    <circle cx="22" cy="23" r="5" fill={muted ? '#7c90b0' : '#d8d0d0'} />
    <path d="M18 27l8-8" stroke={muted ? '#84486c' : '#c02c28'} strokeWidth="3" />
  </svg>
);

const FloatIcon = () => (
  <svg width="18" height="18" viewBox="0 0 18 18" aria-hidden="true">
    <path d="M6 5V2h10v8h-4" fill="none" stroke="#333" strokeWidth="2" />
    <path d="M5 2h12" stroke="#333" strokeWidth="3" />
    <rect x="2" y="8" width="9" height="8" fill="none" stroke="#333" strokeWidth="2" />
    <path d="M1 8h11" stroke="#333" strokeWidth="4" />
  </svg>
);

const CloseIcon = () => (
  <svg width="16" height="16" viewBox="0 0 16 16" aria-hidden="true">
    <path d="M2 1l12 14M14 1L2 15" stroke="#333" strokeWidth="3.5" />
  </svg>
);

/* ---------- data ---------- */

const menus = [
  ['文件', 'F'],
  ['', 'E', 'dit'],
  ['窗体', 'O'],
  ['视图', 'V'],
  ['设置', 'S'],
  ['窗口', 'W'],
  ['帮助', 'H'],
];

const toolGroups = [
  ['new', 'open', 'save'],
  ['back', 'front'],
  ['editWidgets', 'editSignals', 'editBuddies', 'editTabs'],
  ['layoutH', 'layoutV', 'splitH', 'splitV', 'grid', 'form', 'breakLayout', 'adjust'],
];

const widgetGroups = [
  {
    title: 'Item Widgets (Item-Based)',
    items: [['list', 'List Widget'], ['tree', 'Tree Widget'], ['table', 'Table Widget']],
  },
  {
    title: 'Containers',
    items: [
      ['group', 'Group Box'],
      ['scroll', 'Scroll Area'],
      ['toolbox', 'Tool Box'],
      ['tab', 'Tab Widget'],
      ['stacked', 'Stacked Widget'],
      ['frame', 'Frame'],
      ['widget', 'Widget'],
      ['mdi', 'MDI Area'],
      ['dock', 'Dock Widget'],
    ],
  },
  {
    title: 'Input Widgets',
    items: [
      ['combo', 'Combo Box'],
      ['font', 'Font Combo Box'],
      ['line', 'Line Edit'],
      ['text', 'Text Edit'],
      ['plain', 'Plain Text Edit'],
      ['spin', 'Spin Box'],
      ['double', 'Double Spin Box'],
      ['time', 'Time Edit'],
      ['date', 'Date Edit'],
      ['datetime', 'Date/Time Edit'],
      ['dial', 'Dial'],
      ['hscroll', 'Horizontal Scroll Bar'],
    ],
  },
];

const objects = [
  { name: 'MainWindow', cls: 'QMainWindow', indent: 0, arrow: true, height: 36, bg: '#fff' },
  { name: 'centralwidget', cls: 'QWidget', indent: 40, arrow: true, icon: true, height: 40, bg: '#f5f5f5' },
  { name: 'widget', cls: 'QWidget', indent: 120, icon: true, height: 40, bg: '#d9d9d9', selected: true },
  { name: 'menubar', cls: 'QMenuBar', indent: 80, height: 36, bg: '#f5f5f5' },
];

const properties = [
  { name: 'QObject', group: true },
  { name: 'objectName', value: 'widget', bold: true, bg: '#fff0dd', edge: '#ffe1ba' },
  { name: 'QWidget', group: true },
  { name: 'enabled', check: true },
  { name: 'geometry', value: '[(90, 100), 561 x 391]', bold: true, arrow: 'right', dark: true },
  { name: 'sizePolicy', value: '[Preferred, Preferred, 0, 0]', arrow: 'down' },
  { name: '水平策略', value: 'Preferred', child: true, dark: true },
  { name: '垂直策略', value: 'Preferred', child: true },
  { name: '水平伸展', value: '0', child: true, dark: true },
  { name: '垂直伸展', value: '0', child: true },
  { name: 'minimumSize', value: '0 x 0', arrow: 'right', dark: true },
  { name: 'maximumSize', value: '16777215 x 16777215', arrow: 'down' },
  { name: '宽度', value: '16777215', child: true, dark: true },
];

const handles = [[0, 0], [50, 0], [100, 0], [0, 50], [100, 50], [0, 100], [50, 100], [100, 100]];

const tabs = ['信号/槽编辑器', '动作编辑器', '资源浏览器'];

/* ---------- components ---------- */

const ScrollBar = ({ parts, horizontal }) => (
  <Track $horizontal={horizontal}>
    <TrackPart $size={parts[0]} />
    <TrackPart $size={parts[1]} $thumb />
    <TrackPart $size={parts[2]} />
  </Track>
);

const DockHeader = ({ title }) => (
  <DockTitle>
    <h2>{title}</h2>
    <DockButton aria-label="浮动">
      <FloatIcon />
    </DockButton>
    <DockButton aria-label="关闭">
      <CloseIcon />
    </DockButton>
  </DockTitle>
);

const WidgetBox = () => (
  <Dock>
    <DockHeader title="Widget Box" />
    <Filter $margin="10px 5px 0" placeholder="Filter" aria-label="Filter widgets" />
    <Frame $gap={4}>
      <WidgetList>
        {widgetGroups.map((group) => (
          <React.Fragment key={group.title}>
            <WidgetGroup>
              <Chevron size={14} />
              <span>{group.title}</span>
            </WidgetGroup>
            {group.items.map(([icon, label]) => (
              <WidgetRow key={icon}>
                <WidgetIcon name={icon} />
                <span>{label}</span>
              </WidgetRow>
            ))}
          </React.Fragment>
        ))}
      </WidgetList>
      <ScrollBar parts={[430, 518, 300]} />
    </Frame>
  </Dock>
);

const FormEditor = () => (
  <MdiArea>
    <MdiBody>
      <FormWindow>
        <FormTitle>
          <svg width="32" height="24" viewBox="0 0 32 24" aria-hidden="true">
            <path d="M5 0h27v19l-5 5H0V5z" fill="#41cd52" />
            <text x="5" y="18" fontFamily="Open Sans" fontSize="18" fill="#fff">
              Qt
            </text>
          </svg>
          MainWindow - untitled*
        </FormTitle>
        <FormMenu>
          <FormMenuItem>在这里输入</FormMenuItem>
        </FormMenu>
        <FormCanvas>
          <DotGrid />
          <PlacedWidget>
            {handles.map(([x, y]) => (
              <Handle key={`${x}-${y}`} $x={x} $y={y} />
            ))}
          </PlacedWidget>
        </FormCanvas>
      </FormWindow>
    </MdiBody>
    <ScrollBar horizontal parts={[25, 1136, 205]} />
  </MdiArea>
);

const ObjectInspector = () => (
  <Dock>
    <DockHeader title="对象查看器" />
    <Filter $margin="6px 0 0 1px" placeholder="Filter" aria-label="Filter objects" />
    <Frame $gap={12} $openRight>
      <TableView>
        <Table>
          <thead>
            <tr>
              <HeadCell $width={294}>
                <div>对象</div>
              </HeadCell>
              <HeadCell>
                <div>类</div>
              </HeadCell>
            </tr>
          </thead>
          <tbody>
            {objects.map((o) => (
              <tr key={o.name} aria-selected={o.selected}>
                <td>
                  <ObjectName $indent={o.indent} $height={o.height} $bg={o.bg}>
                    {o.arrow && (
                      <ArrowCell>
                        <Chevron />
                      </ArrowCell>
                    )}
                    <span>
                      {o.icon && <LayoutBadge muted={o.selected} />}
                      {o.name}
                    </span>
                  </ObjectName>
                </td>
                <ObjectClass $bg={o.bg}>
                  <div>{o.cls}</div>
                </ObjectClass>
              </tr>
            ))}
          </tbody>
        </Table>
      </TableView>
      <ScrollBar parts={[26, 86, 87]} />
    </Frame>
  </Dock>
);

const PropertyRow = ({ item }) => {
  const bg = item.bg || (item.dark ? '#ffffbf' : '#ffffdd');
  const [checked, setChecked] = useState(true);
  return (
    <PropRow
      $group={item.group}
      $bold={item.bold || item.group}
      $bg={item.group ? '#a0a0a0' : bg}
      $edge={item.group ? '#a0a0a0' : item.edge || '#ffffbf'}
      $indent={item.child ? 80 : 40}
    >
      <td colSpan={item.group ? 2 : 1}>
        <div>
          <ArrowCell>
            {item.group && <Chevron />}
            {item.arrow && <Chevron right={item.arrow === 'right'} color={item.arrow === 'right' ? '#888' : '#333'} />}
          </ArrowCell>
          <span id={item.check ? 'prop-enabled' : undefined}>{item.name}</span>
        </div>
      </td>
      {!item.group && (
        <td>
          {item.check ? (
            <CheckBox
              type="checkbox"
              aria-labelledby="prop-enabled"
              checked={checked}
              onChange={() => setChecked(!checked)}
            />
          ) : (
            item.value
          )}
        </td>
      )}
    </PropRow>
  );
};

const DropArrow = ({ x, y }) => <path d={`M${x} ${y}h10l-5 6z`} fill="#000" />;

const PropertyEditor = () => (
  <Dock>
    <DockHeader title="属性编辑器" />
    <PropTools>
      <Filter $grow placeholder="Filter" aria-label="Filter properties" />
      <PropToolButton $gap={8} aria-label="添加动态属性">
        <svg width="50" height="54" viewBox="0 0 50 54" aria-hidden="true">
          <path
            d="M18 6h10v17h16v10H28v16H18V33H2V23h16z"
            fill="url(#plus)"
            stroke="#10a010"
            strokeWidth="2"
          />
          <DropArrow x={38} y={44} />
        </svg>
      </PropToolButton>
      <PropToolButton $gap={12} aria-label="删除动态属性">
        <MinusIcon width={44} />
      </PropToolButton>
      <PropToolButton $gap={12} aria-label="配置">
        <svg width="50" height="54" viewBox="0 0 50 54" aria-hidden="true">
          <path d="M6 46L34 18" stroke="#888" strokeWidth="9" strokeLinecap="round" />
          <path d="M6 46L34 18" stroke="#e0e0e0" strokeWidth="5" strokeLinecap="round" />
          <path d="M12 40L28 24" stroke="#444" strokeWidth="3" />
          <path
            d="M41 3c-9-1-14 5-11 13l6 7c7 0 12-6 10-13l-5 6-6-2-1-5z"
            fill="#d4d4d4"
            stroke="#999"
            strokeWidth="1.5"
          />
          <circle cx="34" cy="18" r="2" fill="#333" />
          <DropArrow x={40} y={44} />
        </svg>
      </PropToolButton>
    </PropTools>
    <ObjectLabel>widget : QWidget</ObjectLabel>
    <Frame $gap={2} $openRight>
      <TableView>
        <Table>
          <thead>
            <tr>
              <HeadCell $width={299}>
                <div>属性</div>
              </HeadCell>
              <HeadCell>
                <div>值</div>
              </HeadCell>
            </tr>
          </thead>
          <tbody>
            {properties.map((item) => (
              <PropertyRow key={item.name} item={item} />
            ))}
          </tbody>
        </Table>
      </TableView>
      <ScrollBar parts={[26, 174, 364]} />
    </Frame>
  </Dock>
);

const SignalEditor = () => {
  const [active, setActive] = useState(0);
  return (
    <Dock>
      <DockHeader title="信号/槽编辑器" />
      <SignalTools>
        <button aria-label="添加">
          <PlusIcon />
        </button>
        <button aria-label="删除">
          <MinusIcon />
        </button>
      </SignalTools>
      <Frame $gap={1} $openRight>
        <TableView>
          <Table>
            <thead>
              <tr>
                <HeadCell $width={88}>
                  <div>
                    <Chevron size={10} color="#777" />
                    发送者
                  </div>
                </HeadCell>
                <HeadCell $width={64}>
                  <div>信号</div>
                </HeadCell>
                <HeadCell $width={88}>
                  <div>接收者</div>
                </HeadCell>
                <HeadCell>
                  <div>槽</div>
                </HeadCell>
              </tr>
            </thead>
          </Table>
        </TableView>
      </Frame>
      <Tabs role="tablist">
        {tabs.map((tab, i) => (
          <Tab key={tab} role="tab" aria-selected={i === active} $active={i === active} onClick={() => setActive(i)}>
            {tab}
          </Tab>
        ))}
      </Tabs>
    </Dock>
  );
};

const App = () => (
  <Window>
    <GlobalStyle />
    <Defs />
    <TitleBar>
      <svg width="20" height="15" viewBox="0 0 20 15" aria-hidden="true">
        <path d="M3 0h17v12l-3 3H0V3z" fill="#2fb740" />
        <text x="6" y="12" fontFamily="Open Sans" fontWeight="700" fontSize="11" fill="#fff">
          D
        </text>
      </svg>
      <span>Qt 设计师 - Qt Designer</span>
      <WindowButtons>
        <WindowButton aria-label="最小化">
          <svg width="16" height="16" viewBox="0 0 16 16">
            <path d="M1 8h14" stroke="#000" />
          </svg>
        </WindowButton>
        <WindowButton aria-label="还原">
          <svg width="16" height="16" viewBox="0 0 16 16" fill="none" stroke="#000" strokeWidth="1.5">
            <rect x="1" y="4" width="11" height="11" rx="2" />
            <path d="M4 1h8q3 0 3 3v8" />
          </svg>
        </WindowButton>
        <WindowButton aria-label="关闭窗口">
          <svg width="16" height="16" viewBox="0 0 16 16">
            <path d="M1 1l14 14M15 1L1 15" stroke="#000" strokeWidth="1.5" />
          </svg>
        </WindowButton>
      </WindowButtons>
    </TitleBar>
    <MenuBar>
      {menus.map(([label, key, rest]) => (
        <MenuItem key={key}>
          {label}
          {label && '('}
          <u>{key}</u>
          {rest || ')'}
        </MenuItem>
      ))}
    </MenuBar>
    <ToolBarArea>
      {toolGroups.map((group, i) => (
        <ToolGroup key={group[0]} $last={i === toolGroups.length - 1}>
          <Grip />
          {group.map((name) => (
            <ToolButton key={name} aria-label={name} $active={name === 'editWidgets'}>
              <ToolIcon name={name} />
            </ToolButton>
          ))}
        </ToolGroup>
      ))}
    </ToolBarArea>
    <Workspace>
      <WidgetBox />
      <FormEditor />
      <RightColumn>
        <ObjectInspector />
        <PropertyEditor />
        <SignalEditor />
      </RightColumn>
    </Workspace>
    <StatusBar>CSDN @灰长阔以</StatusBar>
    <Desktop>
      <TaskIcon $width={14} $color="#d03c2c" />
      <TaskIcon $width={56} $color="#eef4fb" />
    </Desktop>
  </Window>
);

export default App;
